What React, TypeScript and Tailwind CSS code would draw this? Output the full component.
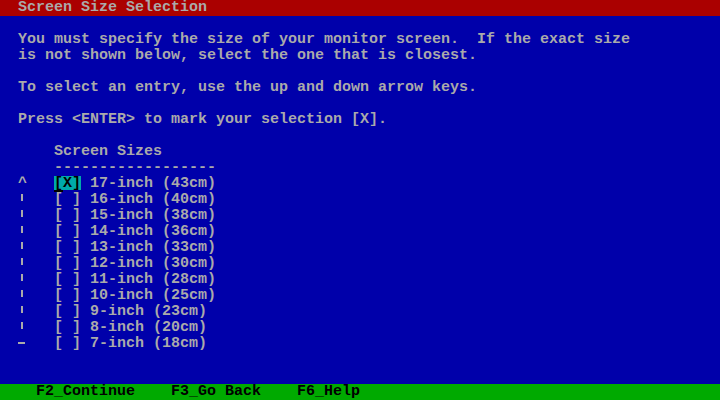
import React from "react";

const sizes = [
  "17-inch (43cm)",
  "16-inch (40cm)",
  "15-inch (38cm)",
  "14-inch (36cm)",
  "13-inch (33cm)",
  "12-inch (30cm)",
  "11-inch (28cm)",
  "10-inch (25cm)",
  "9-inch (23cm)",
  "8-inch (20cm)",
  "7-inch (18cm)",
];

function Row({ children, className = "" }: { children?: React.ReactNode; className?: string }) {
  return <div className={"h-4 leading-4 whitespace-pre flex " + className}>{children}</div>;
}

function Cell({ children, className = "" }: { children?: React.ReactNode; className?: string }) {
  return <span className={"inline-block h-4 " + className}>{children}</span>;
}

function ScrollMark({ i, n }: { i: number; n: number }) {
  if (i === 0) return <Cell className="w-[9px] text-center">^</Cell>;
  if (i === n - 1)
    return (
      <Cell className="w-[9px] relative">
        <span className="absolute left-0 top-[6px] w-[7px] h-[2px] bg-[#aaaaaa]" />
      </Cell>
    );
  return (
    <Cell className="w-[9px] relative">
      <span className="absolute left-[3px] top-[2px] w-[2px] h-[7px] bg-[#aaaaaa]" />
    </Cell>
  );
}

export default function App() {
  return (
    <div
      className="w-[720px] h-[400px] bg-[#0000aa] text-[#aaaaaa] flex flex-col text-[15px] font-bold overflow-hidden"
      style={{ fontFamily: '"Liberation Mono", "DejaVu Sans Mono", monospace' }}
    >
      <Row className="bg-[#aa0000]">{"  Screen Size Selection"}</Row>
      <Row />
      <Row>{"  You must specify the size of your monitor screen.  If the exact size"}</Row>
      <Row>{"  is not shown below, select the one that is closest."}</Row>
      <Row />
      <Row>{"  To select an entry, use the up and down arrow keys."}</Row>
      <Row />
      <Row>{"  Press <ENTER> to mark your selection [X]."}</Row>
      <Row />
      <Row>{"      Screen Sizes"}</Row>
      <Row>{"      ------------------"}</Row>
      {sizes.map((s, i) => (
        <Row key={s}>
          <Cell className="w-[18px]" />
          <ScrollMark i={i} n={sizes.length} />
          <Cell className="w-[27px]" />
          {i === 0 ? (
            <Cell className="w-[27px] relative bg-[#00aaaa] text-black">
              {"[X]"}
              <span className="absolute left-0 bottom-0 w-[27px] h-[2px] bg-[#0000aa]" />
              <span className="absolute left-0 bottom-0 w-[9px] h-[2px] bg-black" />
            </Cell>
          ) : (
            <Cell className="w-[27px]">{"[ ]"}</Cell>
          )}
          <Cell>{" " + s}</Cell>
        </Row>
      ))}
      <Row />
      <Row />
      <Row className="bg-[#00aa00] text-black">{"    F2_Continue    F3_Go Back    F6_Help"}</Row>
    </div>
  );
}
